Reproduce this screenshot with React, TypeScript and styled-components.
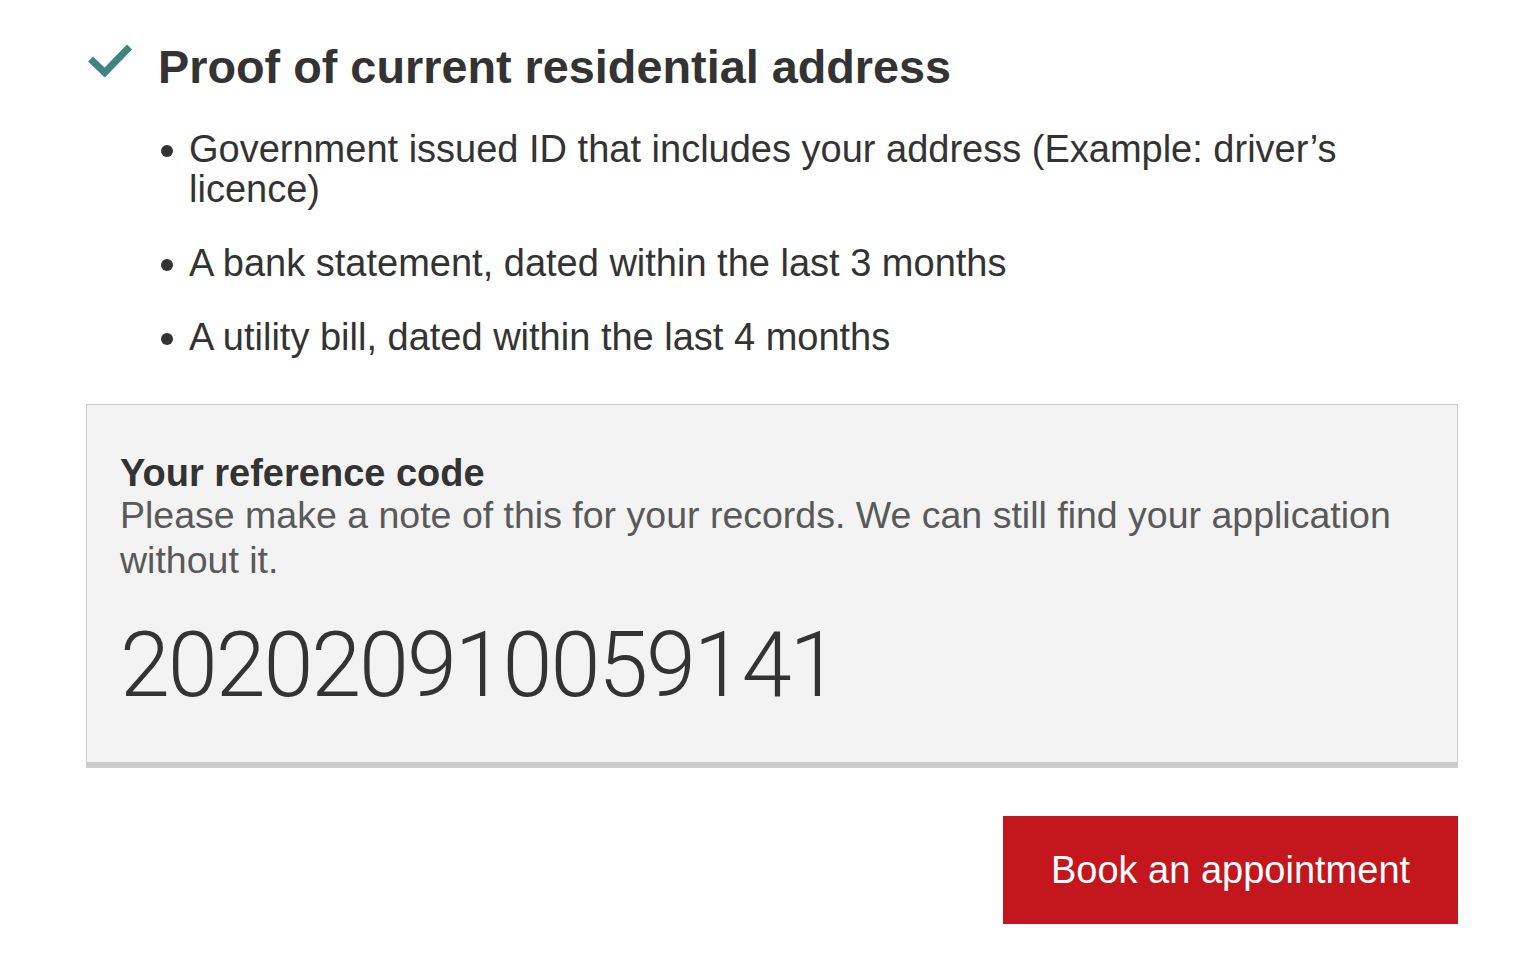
import React from "react";
import styled, { createGlobalStyle } from "styled-components";

const Global = createGlobalStyle`
  html, body { margin: 0; padding: 0; background: #fff; }
  body { font-family: "Liberation Sans", Arial, sans-serif; color: #333; }
`;

const Page = styled.main`
  width: 1372px;
  padding: 38px 0 40px 86px;
`;

const HeadingRow = styled.div`
  display: flex;
  align-items: center;
  height: 58px;
`;

const CheckIcon = styled.svg`
  width: 48px;
  height: 36px;
  flex: none;
  margin-right: 24px;
  margin-top: -14px;
`;

const Title = styled.h2`
  margin: 0;
  font-size: 46.8px;
  line-height: 58px;
  font-weight: 700;
  color: #333;
`;

const List = styled.ul`
  list-style: none;
  margin: 33px 0 0 0;
  padding: 0 0 0 74px;
  display: flex;
  flex-direction: column;
  gap: 34px;
`;

const Item = styled.li`
  position: relative;
  padding-left: 29px;
  font-size: 38px;
  line-height: 40px;
  color: #333;
  &::before {
    content: "";
    position: absolute;
    left: 1px;
    top: 16px;
    width: 12px;
    height: 12px;
    border-radius: 50%;
    background: #333;
  }
`;

const RefBox = styled.section`
  margin-top: 47px;
  background: #f3f3f3;
  border: 1px solid #cccccc;
  border-bottom-width: 6px;
  padding: 48px 33px 51px 33px;
`;

const RefLabel = styled.h3`
  margin: 0;
  font-size: 38px;
  line-height: 40px;
  font-weight: 700;
  color: #333;
`;

const RefNote = styled.p`
  margin: 0;
  font-size: 37.5px;
  line-height: 45px;
  color: #595959;
`;

const RefCode = styled.div`
  margin-top: 38px;
  font-family: Roboto, "Liberation Sans", sans-serif;
  font-weight: 300;
  font-size: 90px;
  line-height: 90px;
  letter-spacing: -2.1px;
  color: #333;
`;

const Actions = styled.div`
  display: flex;
  justify-content: flex-end;
  margin-top: 48px;
`;

const PrimaryButton = styled.button`
  width: 455px;
  height: 108px;
  border: none;
  padding: 0;
  background: #c3161d;
  color: #fff;
  font-family: "Liberation Sans", Arial, sans-serif;
  font-size: 38px;
  cursor: pointer;
`;

export default function App() {
  return (
    <>
      <Global />
      <Page>
        <HeadingRow>
          <CheckIcon viewBox="0 0 48 36">
            <polyline
              points="4.5,17 18.7,30.5 43.5,5"
              fill="none"
              stroke="#3e8580"
              strokeWidth="7"
            />
          </CheckIcon>
          <Title>Proof of current residential address</Title>
        </HeadingRow>
        <List>
          <Item>Government issued ID that includes your address (Example: driver’s licence)</Item>
          <Item>A bank statement, dated within the last 3 months</Item>
          <Item>A utility bill, dated within the last 4 months</Item>
        </List>
        <RefBox>
          <RefLabel>Your reference code</RefLabel>
          <RefNote>
            Please make a note of this for your records. We can still find your application without it.
          </RefNote>
          <RefCode>202020910059141</RefCode>
        </RefBox>
        <Actions>
          <PrimaryButton>Book an appointment</PrimaryButton>
        </Actions>
      </Page>
    </>
  );
}
